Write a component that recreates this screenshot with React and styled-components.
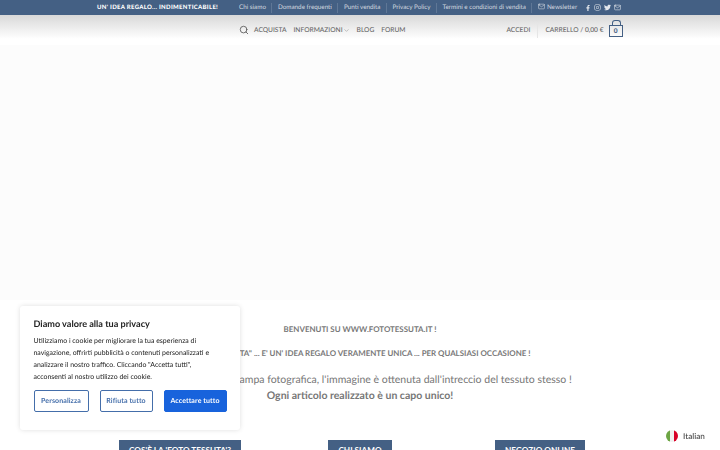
import React from "react";
import styled, { createGlobalStyle } from "styled-components";
import { FaFacebookF, FaInstagram, FaTwitter } from "react-icons/fa";
import { FiMail, FiSearch, FiChevronDown } from "react-icons/fi";

const Global = createGlobalStyle`
  html, body { margin: 0; padding: 0; height: 450px; overflow: hidden; background: #fff; }
  body { font-family: Lato, "Open Sans", sans-serif; color: #777; text-rendering: geometricPrecision; }
  * { box-sizing: border-box; }
`;

const TopBar = styled.div`
  height: 15px;
  background: #446084;
  color: #fff;
  display: flex;
  align-items: center;
  padding: 0 0 0 97px;
  font-size: 6.3px;
`;

const Tagline = styled.strong`
  font-size: 6px;
  font-weight: 900;
  letter-spacing: 0.3px;
  flex: 0 0 136.5px;
  white-space: nowrap;
`;

const TopLink = styled.span`
  color: rgba(255, 255, 255, 0.75);
  padding: 0 5.5px;
  white-space: nowrap;
  font-size: 6.3px;
  border-left: ${(p) => (p.$first ? "none" : "1px solid rgba(255,255,255,.15)")};
  line-height: 10px;
`;

const Social = styled.div`
  margin-left: 2.5px;
  display: flex;
  align-items: center;
  gap: 3px;
  color: rgba(255, 255, 255, 0.85);
`;

const HeaderBar = styled.header`
  height: 30px;
  background: linear-gradient(#d8d8d8, #fff 80%);
  display: flex;
  align-items: center;
  padding: 0 97px 0 239px;
  font-size: 6.65px;
  color: #666;
`;

const NavItem = styled.span`
  margin-left: ${(p) => p.$gap ?? 7}px;
  display: inline-flex;
  align-items: center;
  white-space: nowrap;
  font-weight: 500;
`;

const Spacer = styled.div`
  flex: 1;
`;

const CartBox = styled.span`
  position: relative;
  margin: 2px 0 0 5px;
  width: 14.5px;
  height: 12px;
  border: 1.5px solid #446084;
  color: #446084;
  font-size: 6.5px;
  font-weight: 900;
  display: flex;
  align-items: center;
  justify-content: center;
  &::before {
    content: "";
    position: absolute;
    left: 2.5px;
    top: -6px;
    width: 6.5px;
    height: 5px;
    border: 1px solid #446084;
    border-bottom: 0;
    border-radius: 3px 3px 0 0;
  }
`;

const Divider = styled.span`
  width: 1px;
  height: 15px;
  background: #e6e6e6;
  margin: 0 7px;
`;

const Hero = styled.div`
  height: 255px;
  background: #fcfcfc;
`;

const Intro = styled.section`
  padding-top: 24px;
  text-align: center;
  white-space: nowrap;
`;

const Small = styled.p`
  margin: 0 0 14px;
  font-size: 7.9px;
  line-height: 10px;
  font-weight: 700;
  color: #777;
`;

const Lead = styled.p`
  margin: 0;
  font-size: 10.5px;
  line-height: 16px;
  color: #777;
  font-weight: ${(p) => (p.$bold ? 700 : 400)};
`;

const ButtonRow = styled.div`
  display: grid;
  grid-template-columns: repeat(3, 180px);
  justify-content: center;
  margin-top: 36px;
`;

const ButtonCell = styled.div`
  display: flex;
  justify-content: center;
`;

const Cta = styled.span`
  background: #446084;
  color: #fff;
  height: 26px;
  padding: 0 10px;
  font-size: 8.2px;
  font-weight: 700;
  line-height: 20px;
  white-space: nowrap;
`;

const CookieCard = styled.aside`
  position: fixed;
  left: 20px;
  top: 306px;
  width: 220px;
  height: 124px;
  background: #fff;
  border-radius: 3px;
  box-shadow: 0 0 5px rgba(0, 0, 0, 0.13);
  padding: 10.5px 13.5px 0;
`;

const CookieTitle = styled.h3`
  margin: 0;
  font-size: 9.1px;
  line-height: 13px;
  font-weight: 700;
  color: #212121;
`;

const CookieText = styled.p`
  margin: 5px 0 0;
  font-size: 6.95px;
  line-height: 12px;
  font-weight: 400;
  color: #212121;
  white-space: nowrap;
`;

const CookieButtons = styled.div`
  display: flex;
  justify-content: space-between;
  margin-top: 7.5px;
`;

const CookieButton = styled.span`
  width: ${(p) => p.$w}px;
  height: 22px;
  border: ${(p) => (p.$solid ? "1px solid #1863dc" : "1.5px solid #446eaa")};
  border-radius: 2px;
  background: ${(p) => (p.$solid ? "#1863dc" : "#fff")};
  color: ${(p) => (p.$solid ? "#fff" : "#446eaa")};
  font-size: 7px;
  font-weight: 700;
  display: flex;
  align-items: center;
  justify-content: center;
  letter-spacing: 0.1px;
`;

const LangSwitch = styled.div`
  position: fixed;
  left: 666px;
  top: 430px;
  display: flex;
  align-items: center;
  gap: 5px;
  font-size: 8.2px;
  color: #444;
  font-weight: 500;
`;

const Flag = () => (
  <svg width="12" height="12" viewBox="0 0 12 12">
    <defs>
      <clipPath id="c">
        <circle cx="6" cy="6" r="6" />
      </clipPath>
    </defs>
    <g clipPath="url(#c)">
      <rect width="4" height="12" fill="#6da544" />
      <rect x="4" width="4" height="12" fill="#f0f0f0" />
      <rect x="8" width="4" height="12" fill="#d80027" />
    </g>
  </svg>
);

export default function App() {
  return (
    <>
      <Global />
      <TopBar>
        <Tagline>UN' IDEA REGALO... INDIMENTICABILE!</Tagline>
        <TopLink $first>Chi siamo</TopLink>
        <TopLink>Domande frequenti</TopLink>
        <TopLink>Punti vendita</TopLink>
        <TopLink>Privacy Policy</TopLink>
        <TopLink>Termini e condizioni di vendita</TopLink>
        <TopLink>
          <FiMail size={7} style={{ marginRight: 2, verticalAlign: -1 }} />
          Newsletter
        </TopLink>
        <Social>
          <FaFacebookF size={6} />
          <FaInstagram size={7} />
          <FaTwitter size={7} />
          <FiMail size={7} />
        </Social>
      </TopBar>
      <HeaderBar>
        <FiSearch size={10} color="#555" />
        <NavItem $gap={5}>ACQUISTA</NavItem>
        <NavItem>
          INFORMAZIONI
          <FiChevronDown size={7} color="#999" />
        </NavItem>
        <NavItem>BLOG</NavItem>
        <NavItem>FORUM</NavItem>
        <Spacer />
        <NavItem>ACCEDI</NavItem>
        <Divider />
        <NavItem $gap={0}>CARRELLO / 0,00 €</NavItem>
        <CartBox>0</CartBox>
      </HeaderBar>
      <Hero />
      <Intro>
        <Small>BENVENUTI SU WWW.FOTOTESSUTA.IT !</Small>
        <Small>"FOTO TESSUTA" ... E' UN' IDEA REGALO VERAMENTE UNICA ... PER QUALSIASI OCCASIONE !</Small>
        <Lead>Non è una banale stampa fotografica, l'immagine è ottenuta dall'intreccio del tessuto stesso !</Lead>
        <Lead $bold>Ogni articolo realizzato è un capo unico!</Lead>
        <ButtonRow>
          <ButtonCell>
            <Cta>COS'È LA 'FOTO TESSUTA'?</Cta>
          </ButtonCell>
          <ButtonCell>
            <Cta>CHI SIAMO</Cta>
          </ButtonCell>
          <ButtonCell>
            <Cta>NEGOZIO ONLINE</Cta>
          </ButtonCell>
        </ButtonRow>
      </Intro>
      <CookieCard>
        <CookieTitle>Diamo valore alla tua privacy</CookieTitle>
        <CookieText>
          Utilizziamo i cookie per migliorare la tua esperienza di
          <br />
          navigazione, offrirti pubblicità o contenuti personalizzati e
          <br />
          analizzare il nostro traffico. Cliccando "Accetta tutti",
          <br />
          acconsenti al nostro utilizzo dei cookie.
        </CookieText>
        <CookieButtons>
          <CookieButton $w={55}>Personalizza</CookieButton>
          <CookieButton $w={53}>Rifiuta tutto</CookieButton>
          <CookieButton $w={63} $solid>
            Accettare tutto
          </CookieButton>
        </CookieButtons>
      </CookieCard>
      <LangSwitch>
        <Flag />
        Italian
      </LangSwitch>
    </>
  );
}
